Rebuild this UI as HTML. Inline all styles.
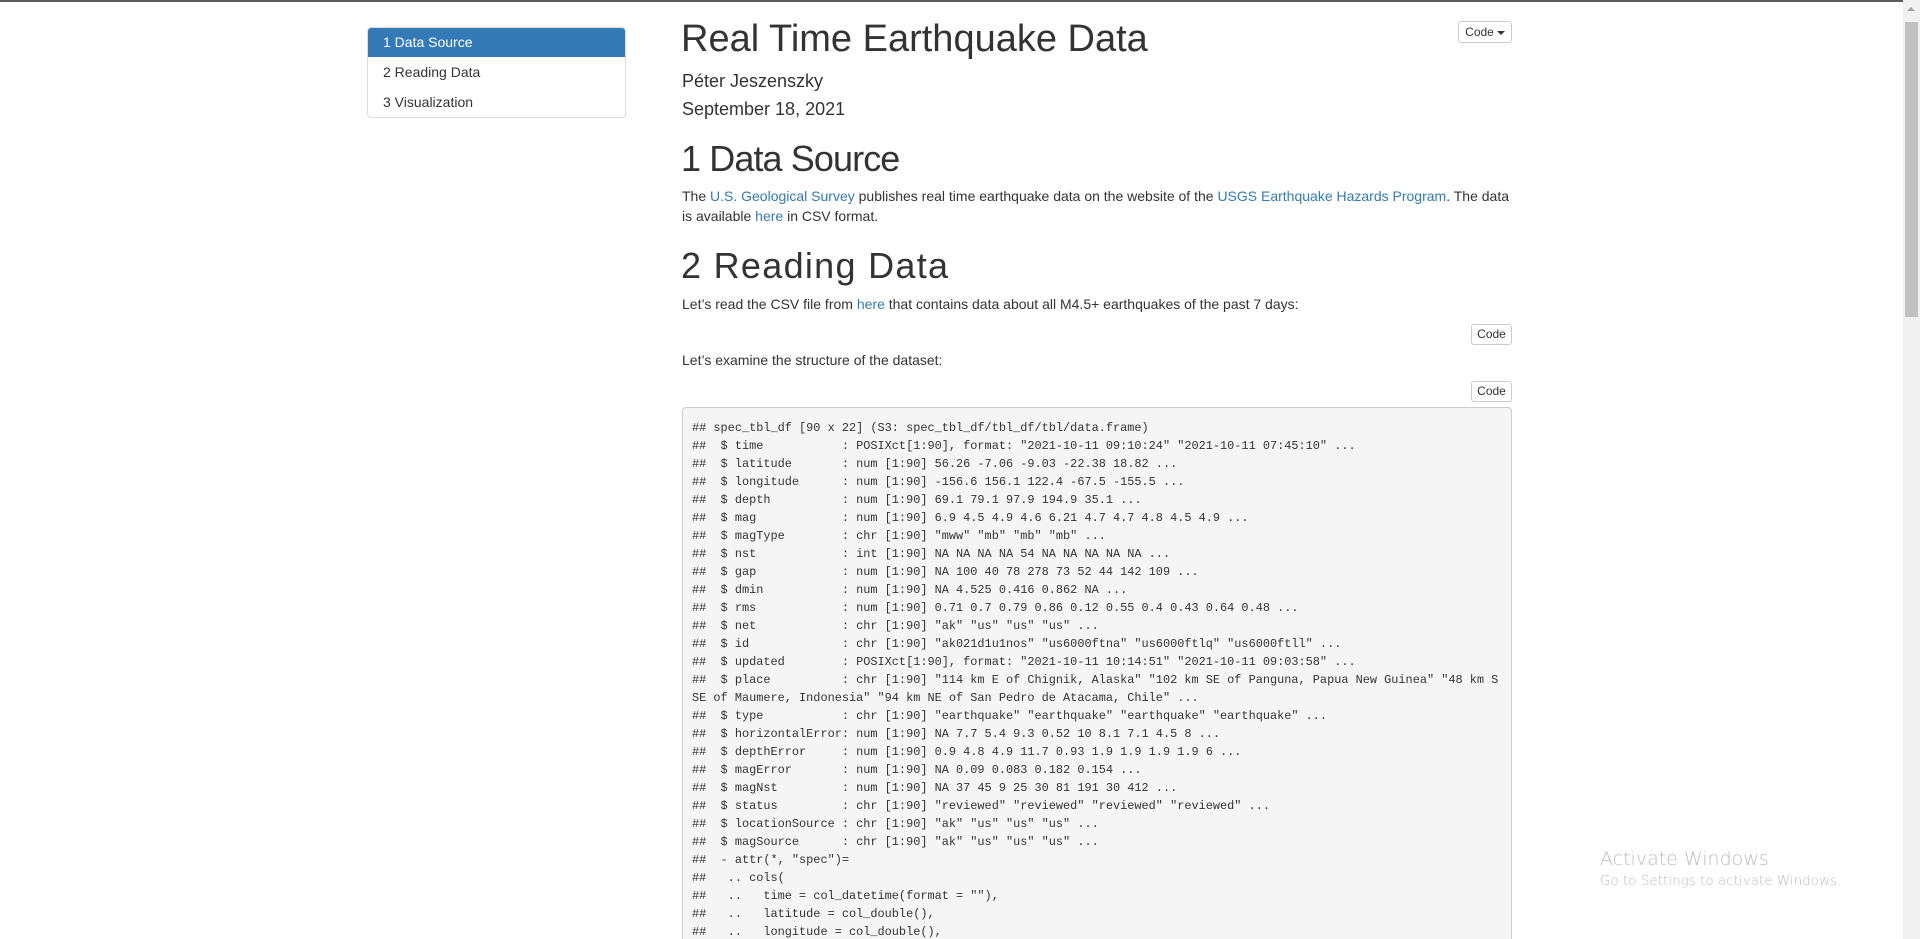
<!DOCTYPE html>
<html><head><meta charset="utf-8">
<style>
html{margin:0;padding:0;width:1920px;height:939px;overflow:hidden;}
body{margin:0;padding:0;width:1920px;height:939px;overflow:hidden;background:#fff;position:relative;font-family:"Liberation Sans",Arial,sans-serif;font-size:14px;color:#333;}
.topline{position:absolute;left:0;top:0;width:1903px;height:2px;background:#5a5a5a;}
.abs{position:absolute;white-space:nowrap;}
a{color:#337ab7;text-decoration:none;}
.toc{position:absolute;left:367px;top:27px;width:257px;height:89px;border:1px solid #ddd;border-radius:4px;overflow:hidden;}
.toc div{height:30px;line-height:30px;padding-left:15px;font-size:14px;color:#333;}
.toc .act{background:#337ab7;color:#fff;height:29px;line-height:29px;}
.h1{font-size:36px;line-height:40px;font-weight:500;color:#333;}
.h4{font-size:18px;line-height:22px;}
.btn{position:absolute;border:1px solid #ccc;border-radius:3px;background:#fff;font-size:12px;line-height:19px;text-align:center;color:#333;box-sizing:border-box;}
.caret{display:inline-block;width:0;height:0;border-left:4px solid transparent;border-right:4px solid transparent;border-top:4px solid #333;vertical-align:middle;margin-left:3px;}
pre{position:absolute;left:682px;top:407px;width:830px;height:545px;margin:0;box-sizing:border-box;background:#f5f5f5;border:1px solid #ccc;border-radius:4px;padding:11px 9px;font-family:"Liberation Mono",Consolas,monospace;font-size:11.9px;line-height:18px;color:#333;overflow:hidden;}
.sb{position:absolute;left:1903px;top:0;width:17px;height:939px;background:#f1f1f1;}
.thumb{position:absolute;left:1905px;top:22px;width:13px;height:295px;background:#c1c1c1;}
.arr{position:absolute;left:1907px;top:7px;width:0;height:0;border-left:4px solid transparent;border-right:4px solid transparent;border-bottom:4px solid #a3a3a3;}
.win{position:absolute;left:1600px;color:#bdbdbd;font-family:"DejaVu Sans","Liberation Sans",sans-serif;font-weight:300;white-space:nowrap;}
</style></head><body>
<div class="topline"></div>

<div class="toc">
<div class="act">1 Data Source</div>
<div>2 Reading Data</div>
<div>3 Visualization</div>
</div>

<div class="btn" style="left:1458px;top:21px;width:54px;height:22px;line-height:20px;">Code<span class="caret"></span></div>

<div class="abs h1" style="left:681px;top:19px;font-size:38px;">Real Time Earthquake Data</div>
<div class="abs h4" style="left:682px;top:70px;">Péter Jeszenszky</div>
<div class="abs h4" style="left:682px;top:98px;">September 18, 2021</div>

<div class="abs h1" style="left:681px;top:139px;letter-spacing:-0.9px;">1 Data Source</div>
<div class="abs" style="left:682px;top:186px;line-height:20px;">The <a>U.S. Geological Survey</a> publishes real time earthquake data on the website of the <a>USGS Earthquake Hazards Program</a>. The data<br>is available <a>here</a> in CSV format.</div>

<div class="abs h1" style="left:681px;top:246px;letter-spacing:1.3px;">2 Reading Data</div>
<div class="abs" style="left:682px;top:294px;line-height:20px;">Let’s read the CSV file from <a>here</a> that contains data about all M4.5+ earthquakes of the past 7 days:</div>

<div class="btn" style="left:1471px;top:324px;width:41px;height:21px;">Code</div>

<div class="abs" style="left:682px;top:350px;line-height:20px;">Let’s examine the structure of the dataset:</div>

<div class="btn" style="left:1471px;top:381px;width:41px;height:21px;">Code</div>

<pre>## spec_tbl_df [90 x 22] (S3: spec_tbl_df/tbl_df/tbl/data.frame)
##  $ time           : POSIXct[1:90], format: "2021-10-11 09:10:24" "2021-10-11 07:45:10" ...
##  $ latitude       : num [1:90] 56.26 -7.06 -9.03 -22.38 18.82 ...
##  $ longitude      : num [1:90] -156.6 156.1 122.4 -67.5 -155.5 ...
##  $ depth          : num [1:90] 69.1 79.1 97.9 194.9 35.1 ...
##  $ mag            : num [1:90] 6.9 4.5 4.9 4.6 6.21 4.7 4.7 4.8 4.5 4.9 ...
##  $ magType        : chr [1:90] "mww" "mb" "mb" "mb" ...
##  $ nst            : int [1:90] NA NA NA NA 54 NA NA NA NA NA ...
##  $ gap            : num [1:90] NA 100 40 78 278 73 52 44 142 109 ...
##  $ dmin           : num [1:90] NA 4.525 0.416 0.862 NA ...
##  $ rms            : num [1:90] 0.71 0.7 0.79 0.86 0.12 0.55 0.4 0.43 0.64 0.48 ...
##  $ net            : chr [1:90] "ak" "us" "us" "us" ...
##  $ id             : chr [1:90] "ak021d1u1nos" "us6000ftna" "us6000ftlq" "us6000ftll" ...
##  $ updated        : POSIXct[1:90], format: "2021-10-11 10:14:51" "2021-10-11 09:03:58" ...
##  $ place          : chr [1:90] "114 km E of Chignik, Alaska" "102 km SE of Panguna, Papua New Guinea" "48 km S
SE of Maumere, Indonesia" "94 km NE of San Pedro de Atacama, Chile" ...
##  $ type           : chr [1:90] "earthquake" "earthquake" "earthquake" "earthquake" ...
##  $ horizontalError: num [1:90] NA 7.7 5.4 9.3 0.52 10 8.1 7.1 4.5 8 ...
##  $ depthError     : num [1:90] 0.9 4.8 4.9 11.7 0.93 1.9 1.9 1.9 1.9 6 ...
##  $ magError       : num [1:90] NA 0.09 0.083 0.182 0.154 ...
##  $ magNst         : num [1:90] NA 37 45 9 25 30 81 191 30 412 ...
##  $ status         : chr [1:90] "reviewed" "reviewed" "reviewed" "reviewed" ...
##  $ locationSource : chr [1:90] "ak" "us" "us" "us" ...
##  $ magSource      : chr [1:90] "ak" "us" "us" "us" ...
##  - attr(*, "spec")=
##   .. cols(
##   ..   time = col_datetime(format = ""),
##   ..   latitude = col_double(),
##   ..   longitude = col_double(),
##   ..   depth = col_double(),
</pre>

<div class="win" style="top:848px;font-size:19px;">Activate Windows</div>
<div class="win" style="top:873px;font-size:13.5px;">Go to Settings to activate Windows.</div>

<div class="sb"></div>
<div class="arr"></div>
<div class="thumb"></div>
</body></html>
